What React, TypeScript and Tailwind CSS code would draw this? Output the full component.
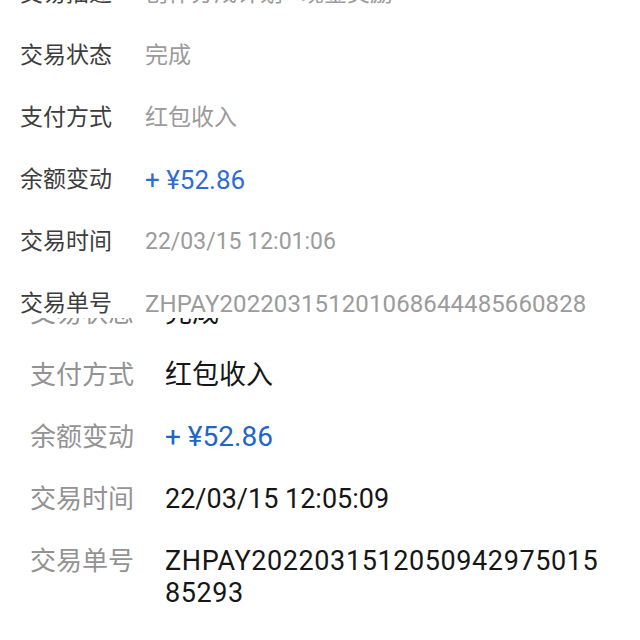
import React from 'react';

type Row = { label: string; value: React.ReactNode; kind?: 'blue' | 'id' };

const topRows: Row[] = [
  { label: '交易描述', value: '创作分成计划—现金奖励' },
  { label: '交易状态', value: '完成' },
  { label: '支付方式', value: '红包收入' },
  { label: '余额变动', value: '+ ¥52.86', kind: 'blue' },
  { label: '交易时间', value: '22/03/15 12:01:06' },
  { label: '交易单号', value: 'ZHPAY202203151201068644485660828', kind: 'id' },
];

const bottomRows: Row[] = [
  { label: '交易状态', value: '完成' },
  { label: '支付方式', value: '红包收入' },
  { label: '余额变动', value: '+ ¥52.86', kind: 'blue' },
  { label: '交易时间', value: '22/03/15 12:05:09' },
  {
    label: '交易单号',
    kind: 'id',
    value: (
      <>
        ZHPAY2022031512050942975015
        <br />
        85293
      </>
    ),
  },
];

const topValue = (kind?: Row['kind']) => {
  if (kind === 'blue') return 'text-[26px] text-[#2f6bd6] leading-[32px] whitespace-nowrap';
  if (kind === 'id') return 'text-[24px] tracking-[0.1px] text-[#9b9b9b] leading-[32px] whitespace-nowrap';
  return 'text-[23px] text-[#9b9b9b] leading-[32px] whitespace-nowrap';
};

const bottomValue = (kind?: Row['kind']) => {
  if (kind === 'blue') return 'text-[28px] text-[#2165c9] leading-[32px] whitespace-nowrap';
  if (kind === 'id') return 'text-[27px] tracking-[0.6px] text-[#161616] leading-[32px] whitespace-nowrap';
  return 'text-[27px] text-[#161616] leading-[32px] whitespace-nowrap';
};

const App = () => {
  return (
    <div className="w-[640px] h-[640px] overflow-hidden bg-white font-['Roboto','Noto_Sans_CJK_SC',sans-serif]">
      {/* first screenshot */}
      <div className="h-[318px] overflow-hidden bg-white">
        <div className="-mt-[37px]">
          {topRows.map((r) => (
            <div key={r.label} className="flex items-center h-[62px] pl-[20px]">
              <span className="w-[125px] shrink-0 text-[23px] text-[#3d3d3d] leading-[32px]">{r.label}</span>
              <span className={topValue(r.kind)}>{r.value}</span>
            </div>
          ))}
        </div>
      </div>

      {/* second screenshot */}
      <div className="h-[322px] overflow-hidden bg-white">
        <div className="-mt-[36px]">
          {bottomRows.map((r) => (
            <div key={r.label} className="flex items-start py-[15px] pl-[30px]">
              <span className="w-[135px] shrink-0 text-[26px] text-[#939393] leading-[32px]">{r.label}</span>
              <span className={bottomValue(r.kind)}>{r.value}</span>
            </div>
          ))}
        </div>
      </div>
    </div>
  );
};

export default App;
